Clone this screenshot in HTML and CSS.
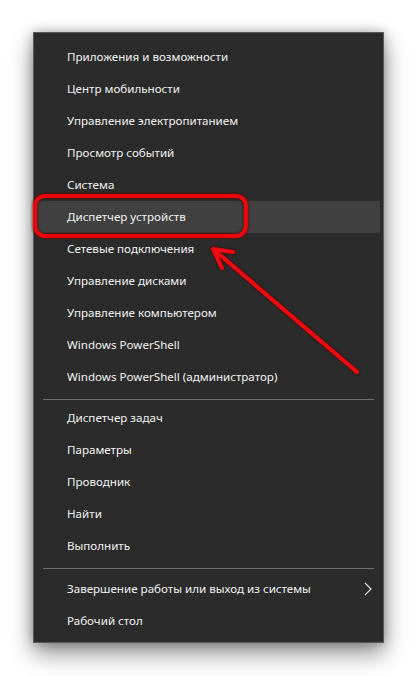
FILE: index.html
```html
<!DOCTYPE html>
<html lang="ru">
<head>
<meta charset="utf-8">
<link rel="stylesheet" href="styles.css">
</head>
<body>
<div class="page">
  <div class="menu">
    <div class="group">
      <div class="item">Приложения и возможности</div>
      <div class="item">Центр мобильности</div>
      <div class="item">Управление электропитанием</div>
      <div class="item">Просмотр событий</div>
      <div class="item">Система</div>
      <div class="item active">Диспетчер устройств</div>
      <div class="item">Сетевые подключения</div>
      <div class="item">Управление дисками</div>
      <div class="item">Управление компьютером</div>
      <div class="item">Windows PowerShell</div>
      <div class="item">Windows PowerShell (администратор)</div>
    </div>
    <div class="sep"></div>
    <div class="group">
      <div class="item">Диспетчер задач</div>
      <div class="item">Параметры</div>
      <div class="item">Проводник</div>
      <div class="item">Найти</div>
      <div class="item">Выполнить</div>
    </div>
    <div class="sep sep2"></div>
    <div class="group">
      <div class="item sub">Завершение работы или выход из системы
        <svg class="chev" width="8" height="14" viewBox="0 0 8 14"><path d="M1 1 L7 7 L1 13" fill="none" stroke="#e8e8e8" stroke-width="1.2"/></svg>
      </div>
      <div class="item">Рабочий стол</div>
    </div>
  </div>
  <svg class="annot" width="417" height="676" viewBox="0 0 417 676">
    <defs>
      <filter id="glow" x="-20%" y="-20%" width="140%" height="140%">
        <feGaussianBlur stdDeviation="1.2"/>
      </filter>
    </defs>
    <g filter="url(#glow)" opacity="0.55">
      <rect x="35" y="196" width="211" height="40" rx="10" fill="none" stroke="#600" stroke-width="6"/>
      <path d="M357 372 L213 249 M213 249 L233 252 M213 249 L222 268" fill="none" stroke="#500" stroke-width="6" stroke-linecap="round"/>
    </g>
    <rect x="35" y="196" width="211" height="40" rx="10" fill="none" stroke="#e8070d" stroke-width="4"/>
    <path d="M357 372 L213 249 M213 249 L233 252 M213 249 L222 268" fill="none" stroke="#ee0a10" stroke-width="4" stroke-linecap="round" stroke-linejoin="round"/>
  </svg>
</div>
</body>
</html>
```
FILE: styles.css
```css
html, body {
  margin: 0;
  padding: 0;
  background: #ffffff;
}
.page {
  position: relative;
  width: 417px;
  height: 676px;
  overflow: hidden;
}
.menu {
  margin-left: 33px;
  margin-top: 32px;
  width: 349px;
  height: 601px;
  background: #2b2b2b;
  border: 1px solid #5a5a5a;
  box-shadow: 0 10px 22px rgba(0, 0, 0, 0.45), 0 0 10px rgba(0, 0, 0, 0.25);
  padding-top: 8px;
  box-sizing: content-box;
  font-family: "Noto Sans", "Open Sans", sans-serif;
  font-size: 11.6px;
  color: #f2f2f2;
  display: flex;
  flex-direction: column;
}
.group {
  display: flex;
  flex-direction: column;
}
.item {
  height: 32px;
  line-height: 32px;
  padding-left: 30px;
  margin: 0 3px;
  position: relative;
  white-space: nowrap;
}
.item.active {
  background: #404040;
}
.sep {
  height: 1px;
  background: #6e6e6e;
  margin: 6px 9px 2px 9px;
}
.sep2 {
  margin: 6px 9px 4px 9px;
}
.chev {
  position: absolute;
  right: 8px;
  top: 9px;
}
.annot {
  position: absolute;
  left: 0;
  top: 0;
  pointer-events: none;
}
```
